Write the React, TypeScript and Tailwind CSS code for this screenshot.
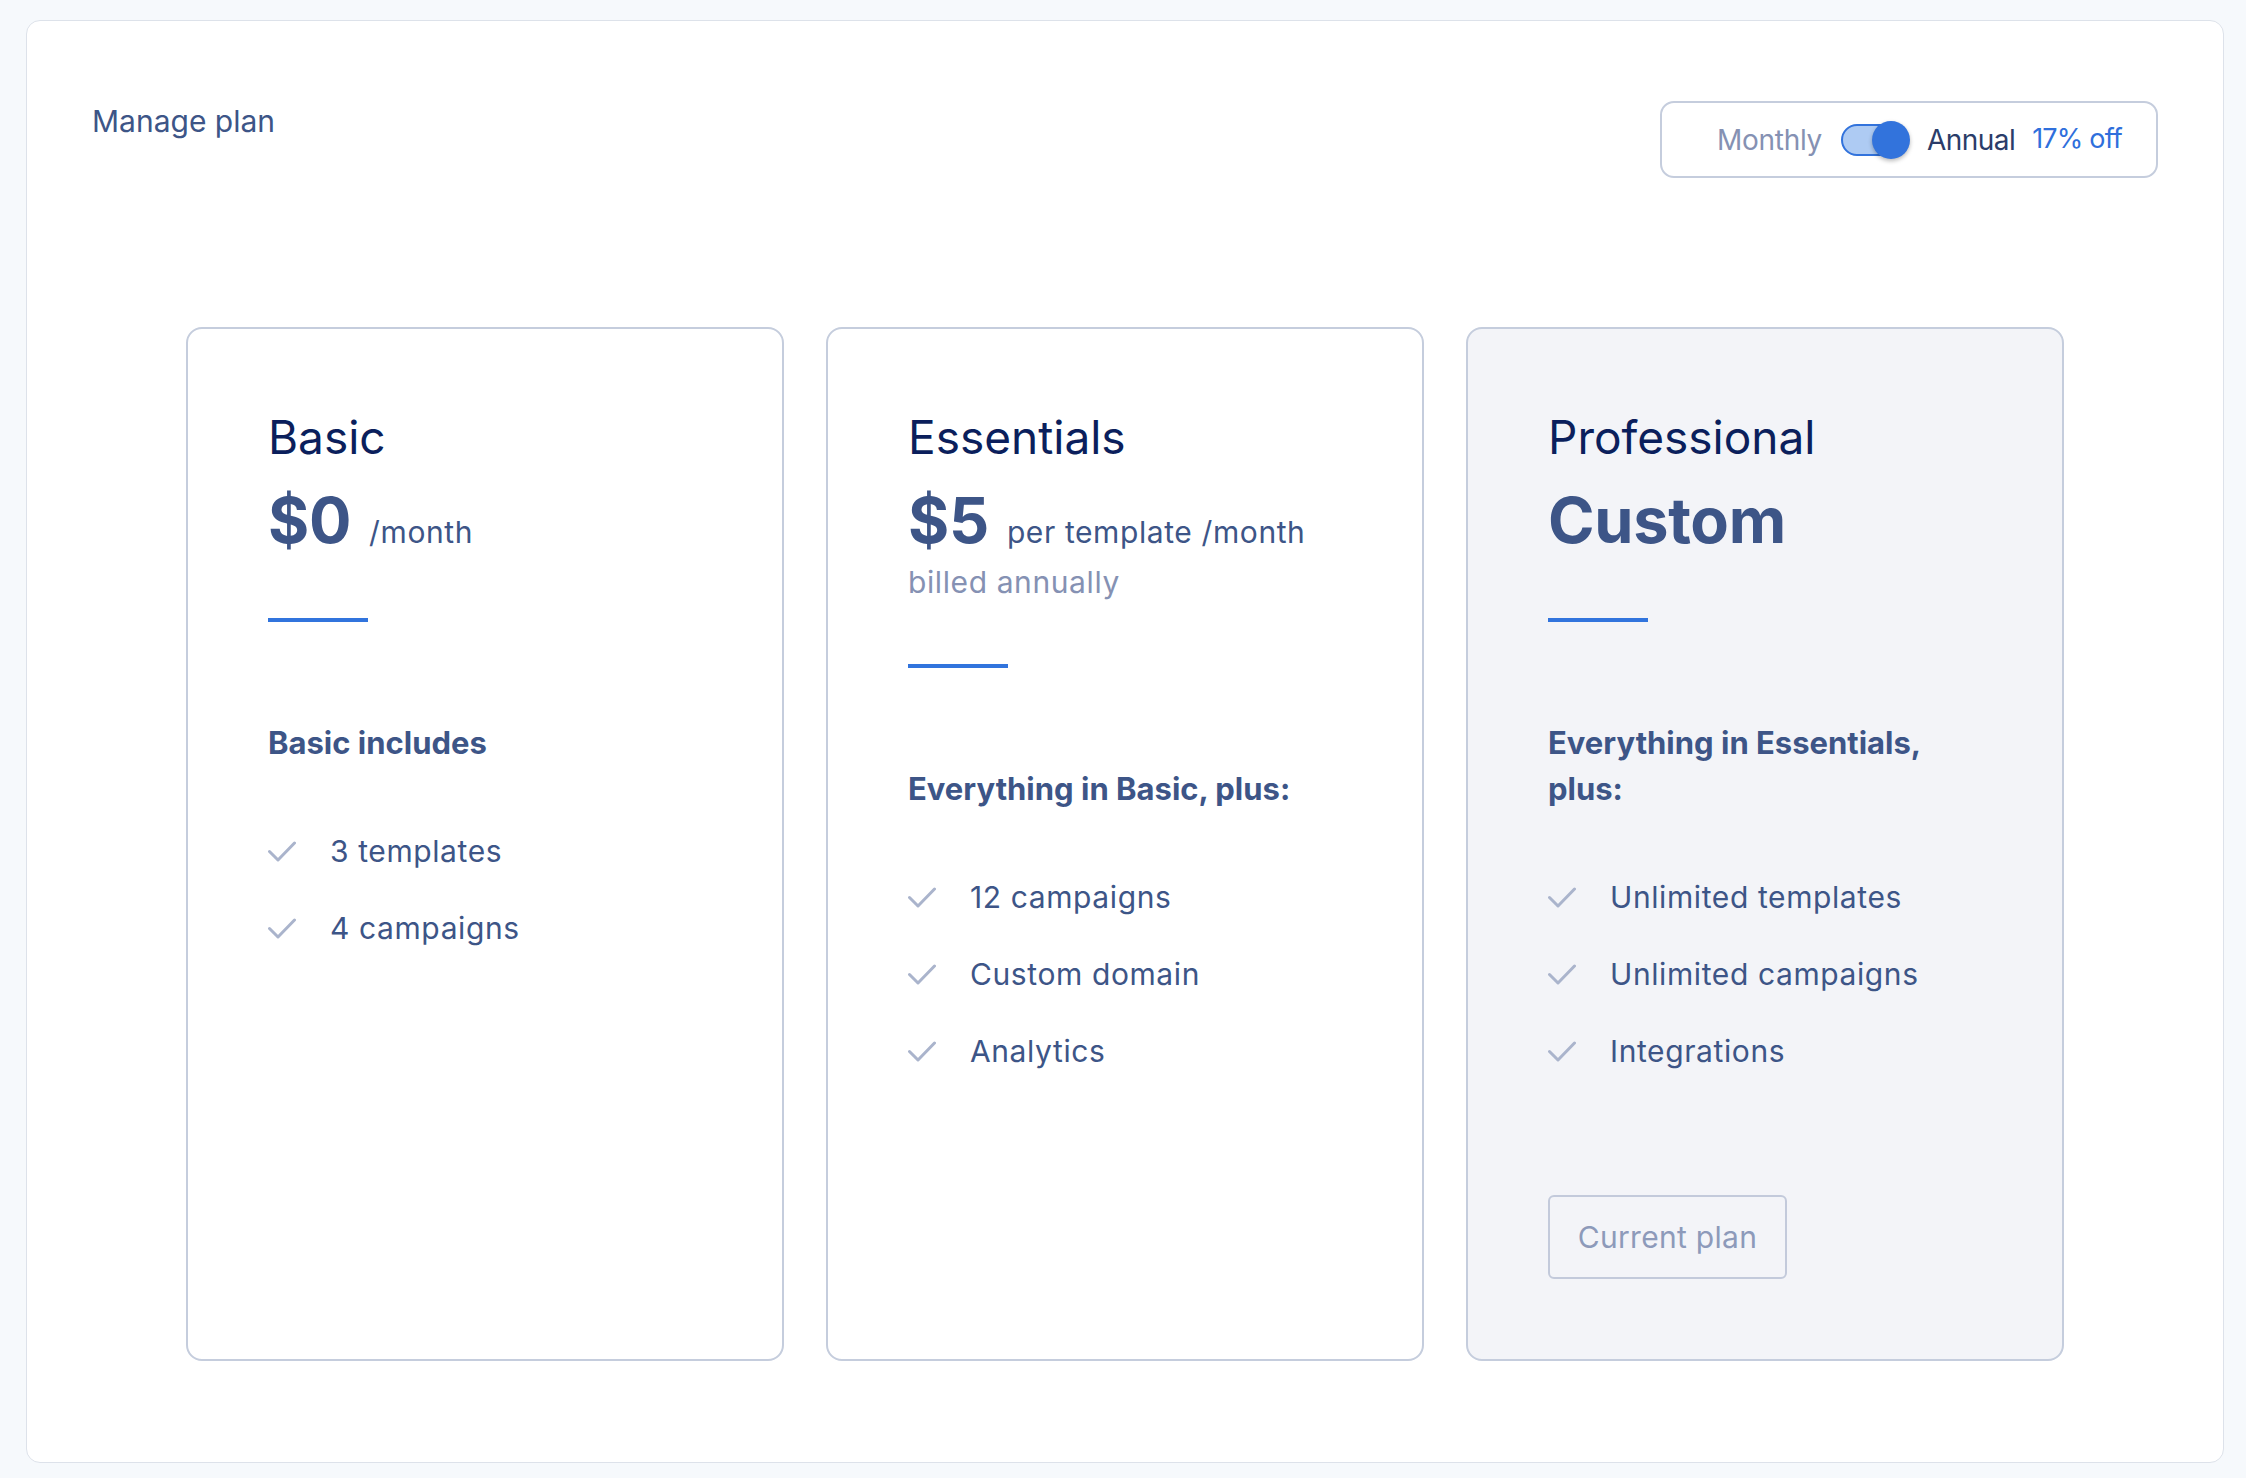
import React from 'react';

type Plan = {
  name: string;
  price: string;
  unit?: string;
  note?: string;
  heading: string;
  features: string[];
  current?: boolean;
};

const plans: Plan[] = [
  {
    name: 'Basic',
    price: '$0',
    unit: '/month',
    heading: 'Basic includes',
    features: ['3 templates', '4 campaigns'],
  },
  {
    name: 'Essentials',
    price: '$5',
    unit: 'per template /month',
    note: 'billed annually',
    heading: 'Everything in Basic, plus:',
    features: ['12 campaigns', 'Custom domain', 'Analytics'],
  },
  {
    name: 'Professional',
    price: 'Custom',
    heading: 'Everything in Essentials, plus:',
    features: ['Unlimited templates', 'Unlimited campaigns', 'Integrations'],
    current: true,
  },
];

const CheckMark: React.FC = () => (
  <svg width="28" height="21" viewBox="0 0 28 21" fill="none" className="shrink-0">
    <polyline points="1.5,10.5 10,19 26.5,2" stroke="#aab4cc" strokeWidth="3" strokeLinecap="round" strokeLinejoin="round" />
  </svg>
);

const PlanCard: React.FC<{ plan: Plan }> = ({ plan }) => {
  return (
    <div
      className={`w-[598px] rounded-[16px] border-2 border-[#c5cddd] pl-[80px] pr-[40px] pt-[80px] pb-[80px] ${
        plan.current ? 'bg-[#f3f4f8]' : 'bg-white'
      }`}
    >
      <div className="text-[46px] leading-[56px] text-[#0b1f5c]">{plan.name}</div>
      <div className="mt-[19px] flex h-[72px] items-baseline leading-[72px]">
        <span className="text-[63px] font-bold tracking-[-0.005em] text-[#3d5587]">{plan.price}</span>
        {plan.unit && (
          <span className="ml-[18px] text-[30px] tracking-[0.02em] text-[#3d5587]">{plan.unit}</span>
        )}
      </div>
      {plan.note && (
        <div className="mt-[6px] text-[30px] leading-[40px] tracking-[0.02em] text-[#8591b3]">{plan.note}</div>
      )}
      <div className="mt-[62px] h-[4px] w-[100px] bg-[#3174dd]" />
      <div className="mt-[98px] max-w-[420px] text-[31px] leading-[46px] font-bold text-[#3d5587]">
        {plan.heading}
      </div>
      <ul className="mt-[47px] flex flex-col">
        {plan.features.map((f) => (
          <li key={f} className="flex h-[77px] items-center">
            <CheckMark />
            <span className="ml-[34px] text-[30px] tracking-[0.02em] text-[#3d5587]">{f}</span>
          </li>
        ))}
      </ul>
      {plan.current && (
        <button className="mt-[105px] flex h-[84px] w-[239px] items-center justify-center rounded-[6px] border-2 border-[#c3cadb] text-[30px] tracking-[0.01em] text-[#8d9aba]">
          Current plan
        </button>
      )}
    </div>
  );
};

const BillingToggle: React.FC = () => (
  <div className="flex h-[77px] w-[498px] items-center rounded-[14px] border-2 border-[#c5cddd] pl-[55px]">
    <span className="text-[28px] tracking-[-0.01em] text-[#8591b3]">Monthly</span>
    <div className="relative ml-[19px] h-[38px] w-[69px] shrink-0">
      <div className="absolute left-0 top-[3px] h-[32px] w-[62px] rounded-full border-2 border-[#3273dc] bg-[#aecbf3]" />
      <div className="absolute right-0 top-0 h-[38px] w-[38px] rounded-full bg-[#3273dc] shadow-[0_2px_4px_rgba(0,0,0,0.28)]" />
    </div>
    <span className="ml-[17px] text-[28px] tracking-[-0.02em] text-[#2b3c69]">Annual</span>
    <span className="ml-[17px] text-[27px] tracking-[-0.03em] text-[#2f6fdc]">17% off</span>
  </div>
);

export default function App() {
  return (
    <div className="min-h-screen bg-[#f6f9fc] pl-[26px] pr-[22px] pt-[20px] pb-[16px] font-['Inter',sans-serif]">
      <div className="rounded-[14px] border border-[#dde2ea] bg-white px-[65px] pt-[80px] pb-[101px]">
        <div className="flex items-start justify-between">
          <h1 className="text-[30px] leading-[40px] text-[#3d5587]">Manage plan</h1>
          <BillingToggle />
        </div>
        <div className="mt-[149px] flex justify-center gap-[42px]">
          {plans.map((p) => (
            <PlanCard key={p.name} plan={p} />
          ))}
        </div>
      </div>
    </div>
  );
}
